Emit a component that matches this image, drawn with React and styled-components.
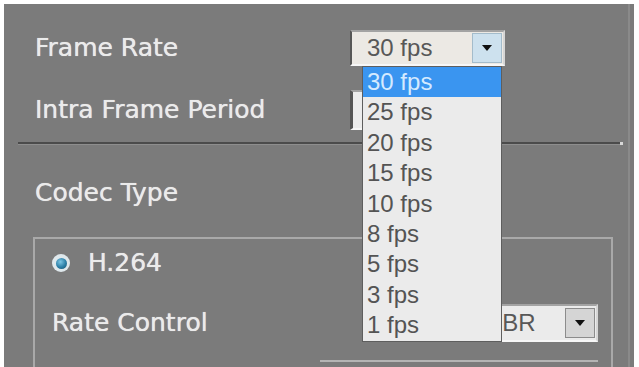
import styled, { createGlobalStyle } from 'styled-components'

const GlobalStyle = createGlobalStyle`
  html, body {
    margin: 0;
    padding: 0;
    background: #ffffff;
  }
`

const Panel = styled.div`
  margin: 4px 0 0 4px;
  width: 630px;
  height: 363px;
  box-sizing: border-box;
  padding-top: 26px;
  background: #7b7b7b;
  overflow: hidden;
  box-shadow: inset -4px 0 0 #7b7b7b, inset -6px 0 0 #8a8a8a;
  font-family: 'DejaVu Sans', Verdana, sans-serif;
  color: #ebebeb;
`

const FieldRow = styled.div`
  display: grid;
  grid-template-columns: ${(p) => p.labelWidth}px auto;
  align-items: center;
  height: ${(p) => p.height}px;
  margin-top: ${(p) => p.top || 0}px;
  padding-left: ${(p) => p.indent || 0}px;
`

const Label = styled.div`
  font-size: 25px;
  line-height: 30px;
  white-space: nowrap;
  text-shadow: 0 0 0.7px #ebebeb;
`

const Divider = styled.div`
  margin: 12px 12px 0 14px;
  border-top: 2px solid #4b4b4b;
  border-bottom: 1px solid #8e8e8e;
  position: relative;

  &::after {
    content: '';
    position: absolute;
    right: -1px;
    top: -2px;
    width: 3px;
    height: 3px;
    background: #d8d8d8;
  }
`

const GroupBox = styled.div`
  margin: 26px 0 0 29px;
  width: 580px;
  height: 200px;
  box-sizing: border-box;
  border: 2px solid #a9a9a9;
  border-bottom: none;
  padding: 8px 0 0 17px;
`

const RadioRow = styled.div`
  display: flex;
  align-items: center;
  gap: 18px;
  height: 32px;
`

const Radio = styled.span`
  width: 18px;
  height: 18px;
  border-radius: 50%;
  background: #dfe8ec;
  display: flex;
  align-items: center;
  justify-content: center;

  &::before {
    content: '';
    width: 11px;
    height: 11px;
    border-radius: 50%;
    background: radial-gradient(circle at 40% 35%, #7cc6e4 0%, #2b7ea6 55%, #17506c 100%);
  }
`

const SelectWrap = styled.div`
  position: relative;
  width: ${(p) => p.width}px;
`

const SelectBox = styled.div`
  display: flex;
  align-items: center;
  box-sizing: border-box;
  width: ${(p) => p.width}px;
  height: ${(p) => p.height}px;
  background: ${(p) => p.bg || '#ece9e4'};
  border-top: 2px solid #a3a3a3;
  border-left: 2px solid #575757;
  border-bottom: 2px solid #f7f7f7;
  border-right: 2px solid #d6d6d6;
  padding-right: 1px;
`

const SelectText = styled.span`
  flex: 1;
  padding-left: ${(p) => p.pad}px;
  font-family: 'Liberation Sans', Arial, sans-serif;
  font-size: 24px;
  color: #585858;
  white-space: nowrap;
`

const ArrowButton = styled.span`
  width: 30px;
  height: 30px;
  box-sizing: border-box;
  display: flex;
  align-items: center;
  justify-content: center;
  background: ${(p) => (p.active ? '#cde1ee' : '#d5d5d5')};
  border: 1px solid ${(p) => (p.active ? '#a4bccb' : '#8c8c8c')};

  &::before {
    content: '';
    border-left: 5px solid transparent;
    border-right: 5px solid transparent;
    border-top: 6px solid #111;
  }
`

const TextInput = styled.div`
  box-sizing: border-box;
  width: 120px;
  height: 40px;
  background: #ececec;
  border-top: 2px solid #a3a3a3;
  border-left: 3px solid #555555;
  border-bottom: 2px solid #f7f7f7;
  border-right: 2px solid #d6d6d6;
`

const DropList = styled.ul`
  position: absolute;
  top: 100%;
  left: 12px;
  z-index: 5;
  width: 140px;
  margin: 0;
  padding: 0;
  list-style: none;
  box-sizing: border-box;
  background: #ebebeb;
  border: 1px solid #5e5e5e;
`

const DropItem = styled.li`
  height: 30.4px;
  line-height: 30.4px;
  padding-left: 4px;
  font-family: 'Liberation Sans', Arial, sans-serif;
  font-size: 24px;
  background: ${(p) => (p.selected ? '#3a95f0' : 'transparent')};
  color: ${(p) => (p.selected ? '#d4eaff' : '#545454')};
`

const NextEdge = styled.div`
  margin: 18px 0 0 268px;
  width: 278px;
  border-top: 2px solid #b4b4b4;
`

const rates = ['30 fps', '25 fps', '20 fps', '15 fps', '10 fps', '8 fps', '5 fps', '3 fps', '1 fps']

export default function App() {
  return (
    <>
      <GlobalStyle />
      <Panel>
        <FieldRow labelWidth={315} height={36} indent={31}>
          <Label>Frame Rate</Label>
          <SelectWrap width={155}>
            <SelectBox width={155} height={36}>
              <SelectText pad={15}>30 fps</SelectText>
              <ArrowButton active />
            </SelectBox>
            <DropList>
              {rates.map((r, i) => (
                <DropItem key={r} selected={i === 0}>
                  {r}
                </DropItem>
              ))}
            </DropList>
          </SelectWrap>
        </FieldRow>

        <FieldRow labelWidth={315} height={40} top={24} indent={31}>
          <Label>Intra Frame Period</Label>
          <TextInput />
        </FieldRow>

        <Divider />

        <FieldRow labelWidth={315} height={36} top={30} indent={31}>
          <Label>Codec Type</Label>
        </FieldRow>

        <GroupBox>
          <RadioRow>
            <Radio />
            <Label>H.264</Label>
          </RadioRow>
          <FieldRow labelWidth={418} height={38} top={25}>
            <Label>Rate Control</Label>
            <SelectBox width={128} height={38} bg="#ebebeb">
              <SelectText pad={13}>CBR</SelectText>
              <ArrowButton />
            </SelectBox>
          </FieldRow>
          <NextEdge />
        </GroupBox>
      </Panel>
    </>
  )
}
